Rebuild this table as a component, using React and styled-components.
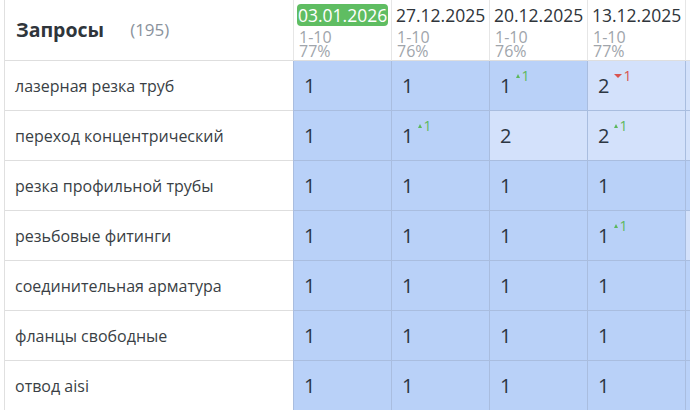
import React from "react";
import styled, { createGlobalStyle } from "styled-components";

const GlobalStyle = createGlobalStyle`
  html, body {
    margin: 0;
    padding: 0;
    background: #ffffff;
    font-family: "Open Sans", "Liberation Sans", sans-serif;
    overflow: hidden;
  }
`;

const dates = [
  { date: "03.01.2026", range: "1-10", pct: "77%", current: true },
  { date: "27.12.2025", range: "1-10", pct: "76%" },
  { date: "20.12.2025", range: "1-10", pct: "76%" },
  { date: "13.12.2025", range: "1-10", pct: "77%" },
  { date: "06.12.2025", range: "1-10", pct: "77%" },
];

// each cell: [value, change, light]
const rows = [
  { q: "лазерная резка труб", cells: [[1], [1], [1, 1], [2, -1, true], [1, 0, true]] },
  { q: "переход концентрический", cells: [[1], [1, 1], [2, 0, true], [2, 1, true], [3, 0, true]] },
  { q: "резка профильной трубы", cells: [[1], [1], [1], [1], [1]] },
  { q: "резьбовые фитинги", cells: [[1], [1], [1], [1, 1], [2, 0, true]] },
  { q: "соединительная арматура", cells: [[1], [1], [1], [1], [1]] },
  { q: "фланцы свободные", cells: [[1], [1], [1], [1], [1]] },
  { q: "отвод aisi", cells: [[1], [1], [1], [1], [1]] },
];

function Change({ value }) {
  if (!value) return null;
  const up = value > 0;
  return (
    <Delta up={up}>
      <Arrow up={up} />
      {Math.abs(value)}
    </Delta>
  );
}

export default function App() {
  return (
    <>
      <GlobalStyle />
      <Page>
        <Table>
          <TitleCell>
            <Title>Запросы</Title>
            <Count>(195)</Count>
          </TitleCell>
          {dates.map((d) => (
            <DateCell key={d.date}>
              <DateText current={d.current}>{d.date}</DateText>
              <Meta>
                {d.range}
                <br />
                {d.pct}
              </Meta>
            </DateCell>
          ))}
          {rows.map((r) => (
            <React.Fragment key={r.q}>
              <QueryCell>{r.q}</QueryCell>
              {r.cells.map(([v, ch, light], i) => (
                <PosCell key={i} light={light}>
                  {v}
                  <Change value={ch} />
                </PosCell>
              ))}
            </React.Fragment>
          ))}
        </Table>
      </Page>
    </>
  );
}

const Page = styled.div`
  width: 690px;
  height: 410px;
  overflow: hidden;
  padding-left: 4px;
  box-sizing: border-box;
`;

const Table = styled.div`
  display: grid;
  grid-template-columns: 289px 98px 98px 98px 98px 98px;
  grid-template-rows: 61px repeat(7, 50px);
  border-left: 1px solid #e0e0e0;
  width: max-content;
`;

const TitleCell = styled.div`
  display: flex;
  align-items: center;
  gap: 26px;
  padding-left: 11px;
  padding-bottom: 2px;
  border-bottom: 1px solid #dedede;
  border-right: 1px solid #e6e6e6;
  box-sizing: border-box;
`;

const Title = styled.span`
  font-size: 19.5px;
  font-weight: 700;
  color: #2f353b;
`;

const Count = styled.span`
  font-size: 17px;
  color: #8a929c;
`;

const DateCell = styled.div`
  display: flex;
  flex-direction: column;
  align-items: flex-start;
  padding: 4px 0 0 4px;
  border-bottom: 1px solid #dedede;
  border-right: 1px solid #e6e6e6;
  box-sizing: border-box;
  overflow: hidden;
`;

const DateText = styled.span`
  font-size: 17.5px;
  line-height: 22px;
  color: ${(p) => (p.current ? "#ffffff" : "#2f353b")};
  background: ${(p) => (p.current ? "#5fbd62" : "transparent")};
  border-radius: 4px;
  padding: 0 1px;
  margin-left: -1px;
  margin-bottom: 4px;
  white-space: nowrap;
`;

const Meta = styled.div`
  font-size: 16px;
  line-height: 14px;
  color: #a0a5ab;
  padding-left: 1px;
  white-space: nowrap;
`;

const QueryCell = styled.div`
  display: flex;
  align-items: center;
  padding-left: 10px;
  font-size: 16px;
  color: #3a3f45;
  border-bottom: 1px solid #dedede;
  box-sizing: border-box;
  white-space: nowrap;
`;

const PosCell = styled.div`
  display: flex;
  align-items: center;
  padding-left: 10px;
  font-size: 20px;
  color: #2c3642;
  background: ${(p) => (p.light ? "#d3e1fb" : "#b9d1f8")};
  border-bottom: 1px solid #a9bddf;
  border-left: 1px solid #a9bddf;
  margin-left: -1px;
  box-sizing: border-box;
`;

const Delta = styled.span`
  display: inline-flex;
  align-items: center;
  align-self: flex-start;
  margin-top: 5px;
  margin-left: 5px;
  font-size: 14px;
  color: ${(p) => (p.up ? "#5cb85c" : "#d9534f")};
`;

const Arrow = styled.span`
  width: 0;
  height: 0;
  margin-right: 1px;
  border-left: ${(p) => (p.up ? 2.5 : 4)}px solid transparent;
  border-right: ${(p) => (p.up ? 2.5 : 4)}px solid transparent;
  ${(p) =>
    p.up
      ? "border-bottom: 4px solid currentColor;"
      : "border-top: 4px solid currentColor;"}
`;
